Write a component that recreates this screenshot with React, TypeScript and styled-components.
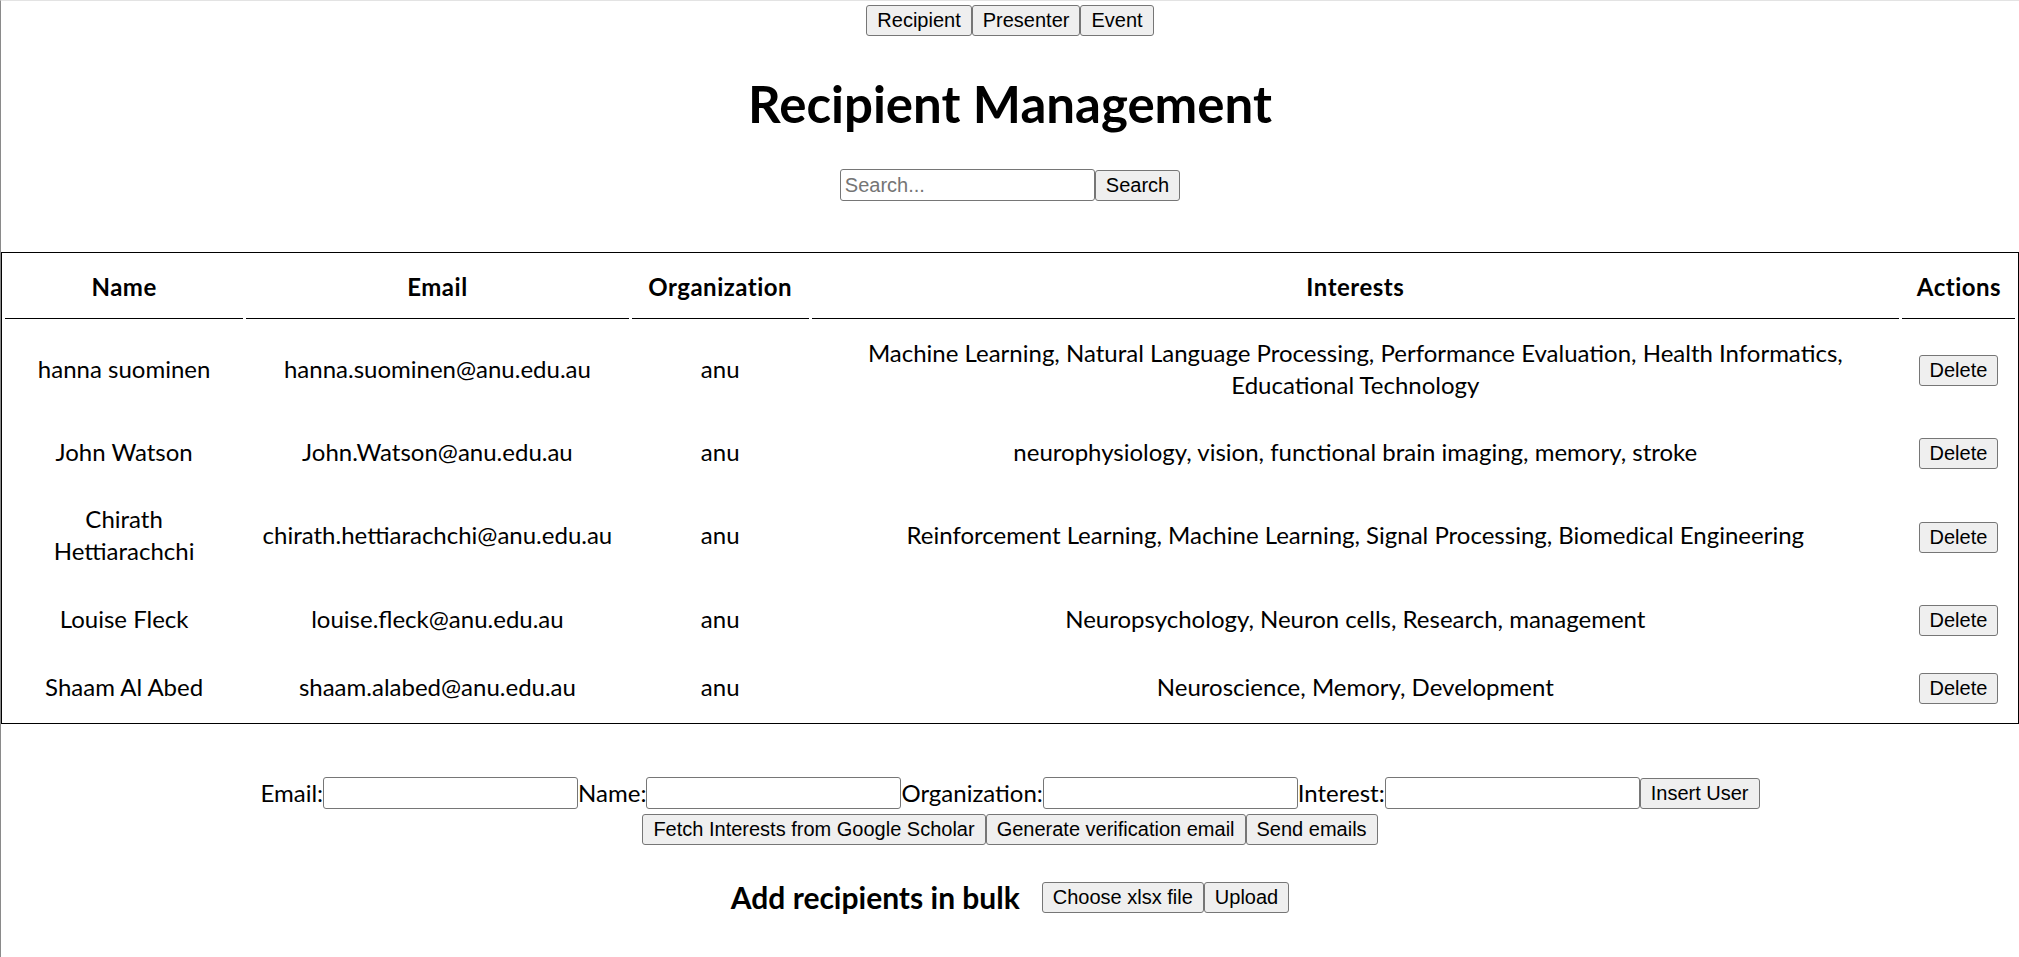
import React from 'react';
import styled, { createGlobalStyle } from 'styled-components';

const GlobalStyle = createGlobalStyle`
  html, body {
    margin: 0;
    padding: 0;
    background: #fff;
  }
  body {
    font-family: 'Segoe UI', Lato, 'Noto Sans', sans-serif;
    font-size: 24px;
    line-height: 32px;
    color: #000;
  }
`;

const Page = styled.div`
  min-height: 956px;
  border-top: 1px solid #e3e3e3;
  border-left: 1px solid #8a8a8a;
  display: flex;
  flex-direction: column;
  align-items: center;
`;

const Nav = styled.nav`
  display: flex;
  margin-top: 4px;
`;

const Button = styled.button`
  font-family: 'Liberation Sans', Arial, sans-serif;
  font-size: 20px;
  line-height: 23px;
  padding: 3px 10px;
  color: #000;
  background: #efefef;
  border: 1px solid #767676;
  border-radius: 3px;
  cursor: pointer;
  white-space: nowrap;
  vertical-align: middle;
`;

const Title = styled.h1`
  font-size: 51px;
  line-height: 64px;
  font-weight: 700;
  margin: 36px 0 33px;
`;

const Row = styled.div<{ $top?: number }>`
  display: flex;
  align-items: center;
  justify-content: center;
  margin-top: ${(p) => p.$top ?? 0}px;
`;

const Input = styled.input`
  box-sizing: border-box;
  width: 255px;
  height: 32px;
  font-family: 'Liberation Sans', Arial, sans-serif;
  font-size: 20px;
  padding: 1px 4px;
  border: 1px solid #767676;
  border-radius: 3px;
  &::placeholder {
    color: #757575;
  }
`;

const Label = styled.label`
  display: flex;
  align-items: center;
  white-space: nowrap;
`;

const Table = styled.table`
  width: 100%;
  margin-top: 51px;
  table-layout: fixed;
  border: 1px solid #000;
  border-spacing: 3px;
`;

const Th = styled.th`
  padding: 15px;
  line-height: 32px;
  font-weight: 700;
  letter-spacing: 0.5px;
  text-align: center;
  border-bottom: 1px solid #000;
`;

const Td = styled.td`
  padding: 15px 15px 16px;
  line-height: 32px;
  text-align: center;
  vertical-align: middle;
`;

const BulkTitle = styled.h3`
  font-size: 30px;
  line-height: 32px;
  font-weight: 700;
  margin: 0 22px 0 0;
`;

const recipients = [
  {
    name: 'hanna suominen',
    email: 'hanna.suominen@anu.edu.au',
    org: 'anu',
    interests:
      'Machine Learning, Natural Language Processing, Performance Evaluation, Health Informatics, Educational Technology',
  },
  {
    name: 'John Watson',
    email: 'John.Watson@anu.edu.au',
    org: 'anu',
    interests: 'neurophysiology, vision, functional brain imaging, memory, stroke',
  },
  {
    name: 'Chirath Hettiarachchi',
    email: 'chirath.hettiarachchi@anu.edu.au',
    org: 'anu',
    interests:
      'Reinforcement Learning, Machine Learning, Signal Processing, Biomedical Engineering',
  },
  {
    name: 'Louise Fleck',
    email: 'louise.fleck@anu.edu.au',
    org: 'anu',
    interests: 'Neuropsychology, Neuron cells, Research, management',
  },
  {
    name: 'Shaam Al Abed',
    email: 'shaam.alabed@anu.edu.au',
    org: 'anu',
    interests: 'Neuroscience, Memory, Development',
  },
];

export default function App() {
  return (
    <Page>
      <GlobalStyle />
      <Nav>
        <Button>Recipient</Button>
        <Button>Presenter</Button>
        <Button>Event</Button>
      </Nav>
      <Title>Recipient Management</Title>
      <Row>
        <Input placeholder="Search..." />
        <Button>Search</Button>
      </Row>
      <Table>
        <colgroup>
          <col style={{ width: 238 }} />
          <col style={{ width: 382 }} />
          <col style={{ width: 177 }} />
          <col style={{ width: 1086 }} />
          <col style={{ width: 113 }} />
        </colgroup>
        <thead>
          <tr>
            <Th>Name</Th>
            <Th>Email</Th>
            <Th>Organization</Th>
            <Th>Interests</Th>
            <Th>Actions</Th>
          </tr>
        </thead>
        <tbody>
          {recipients.map((r) => (
            <tr key={r.email}>
              <Td>{r.name}</Td>
              <Td>{r.email}</Td>
              <Td>{r.org}</Td>
              <Td>{r.interests}</Td>
              <Td>
                <Button>Delete</Button>
              </Td>
            </tr>
          ))}
        </tbody>
      </Table>
      <Row $top={53}>
        <Label>
          Email:<Input />
        </Label>
        <Label>
          Name:<Input />
        </Label>
        <Label>
          Organization:<Input />
        </Label>
        <Label>
          Interest:<Input />
        </Label>
        <Button>Insert User</Button>
      </Row>
      <Row $top={5}>
        <Button>Fetch Interests from Google Scholar</Button>
        <Button>Generate verification email</Button>
        <Button>Send emails</Button>
      </Row>
      <Row $top={36}>
        <BulkTitle>Add recipients in bulk</BulkTitle>
        <Button>Choose xlsx file</Button>
        <Button>Upload</Button>
      </Row>
    </Page>
  );
}
